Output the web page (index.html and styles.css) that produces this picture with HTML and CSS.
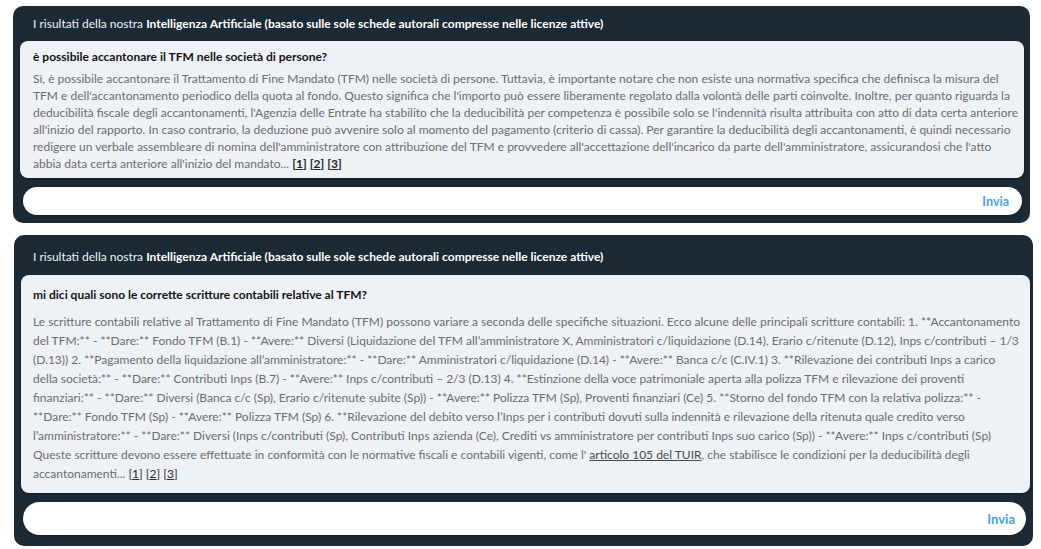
FILE: index.html
```html
<!DOCTYPE html>
<html lang="it">
<head>
  <meta charset="UTF-8" />
  <meta name="viewport" content="width=device-width, initial-scale=1.0" />
  <title>Risposte IA</title>
  <link rel="stylesheet" href="styles.css">
</head>
<body>
  <div class="chat">

    <section class="card card-first">
      <div class="card-head">I risultati della nostra <strong>Intelligenza Artificiale (basato sulle sole schede autorali compresse nelle licenze attive)</strong></div>
      <div class="answer">
        <h2 class="question">è possibile accantonare il TFM nelle società di persone?</h2>
        <p class="reply">Sì, è possibile accantonare il Trattamento di Fine Mandato (TFM) nelle società di persone. Tuttavia, è importante notare che non esiste una normativa specifica che definisca la misura del TFM e dell'accantonamento periodico della quota al fondo. Questo significa che l'importo può essere liberamente regolato dalla volontà delle parti coinvolte. Inoltre, per quanto riguarda la deducibilità fiscale degli accantonamenti, l'Agenzia delle Entrate ha stabilito che la deducibilità per competenza è possibile solo se l'indennità risulta attribuita con atto di data certa anteriore all'inizio del rapporto. In caso contrario, la deduzione può avvenire solo al momento del pagamento (criterio di cassa). Per garantire la deducibilità degli accantonamenti, è quindi necessario redigere un verbale assembleare di nomina dell'amministratore con attribuzione del TFM e provvedere all'accettazione dell'incarico da parte dell'amministratore, assicurandosi che l'atto abbia data certa anteriore all'inizio del mandato... <a class="src src-bold" href="#">1</a> <a class="src src-bold" href="#">2</a> <a class="src src-bold" href="#">3</a></p>
      </div>
      <form class="ask" onsubmit="return false">
        <input type="text" />
        <button type="submit">Invia</button>
      </form>
    </section>

    <section class="card card-second">
      <div class="card-head">I risultati della nostra <strong>Intelligenza Artificiale (basato sulle sole schede autorali compresse nelle licenze attive)</strong></div>
      <div class="answer">
        <h2 class="question">mi dici quali sono le corrette scritture contabili relative al TFM?</h2>
        <p class="reply">Le scritture contabili relative al Trattamento di Fine Mandato (TFM) possono variare a seconda delle specifiche situazioni. Ecco alcune delle principali scritture contabili: 1. **Accantonamento del TFM:** - **Dare:** Fondo TFM (B.1) - **Avere:** Diversi (Liquidazione del TFM all’amministratore X, Amministratori c/liquidazione (D.14), Erario c/ritenute (D.12), Inps c/contributi – 1/3 (D.13)) 2. **Pagamento della liquidazione all’amministratore:** - **Dare:** Amministratori c/liquidazione (D.14) - **Avere:** Banca c/c (C.IV.1) 3. **Rilevazione dei contributi Inps a carico della società:** - **Dare:** Contributi Inps (B.7) - **Avere:** Inps c/contributi – 2/3 (D.13) 4. **Estinzione della voce patrimoniale aperta alla polizza TFM e rilevazione dei proventi finanziari:** - **Dare:** Diversi (Banca c/c (Sp), Erario c/ritenute subite (Sp)) - **Avere:** Polizza TFM (Sp), Proventi finanziari (Ce) 5. **Storno del fondo TFM con la relativa polizza:** - **Dare:** Fondo TFM (Sp) - **Avere:** Polizza TFM (Sp) 6. **Rilevazione del debito verso l’Inps per i contributi dovuti sulla indennità e rilevazione della ritenuta quale credito verso l’amministratore:** - **Dare:** Diversi (Inps c/contributi (Sp), Contributi Inps azienda (Ce), Crediti vs amministratore per contributi Inps suo carico (Sp)) - **Avere:** Inps c/contributi (Sp) Queste scritture devono essere effettuate in conformità con le normative fiscali e contabili vigenti, come l' <a class="law" href="#">articolo 105 del TUIR</a>, che stabilisce le condizioni per la deducibilità degli accantonamenti... <a class="src" href="#">1</a> <a class="src" href="#">2</a> <a class="src" href="#">3</a></p>
      </div>
      <form class="ask" onsubmit="return false">
        <input type="text" />
        <button type="submit">Invia</button>
      </form>
    </section>

  </div>
</body>
</html>
```
FILE: styles.css
```css
body {
  margin: 0;
  background-color: #ffffff;
  font-family: 'Lato', 'Liberation Sans', sans-serif;
  font-size: 12px;
}
.chat {
  padding: 6px 0 0 13px;
}
.card {
  background-color: #1b2a35;
  border-radius: 10px;
  padding: 0 6px 8px 7px;
}
.card-first {
  width: 1004px;
}
.card-second {
  width: 1009px;
  margin: 12px 0 0 1px;
  padding: 0 3px 11px 7px;
}
.card-head {
  color: #eef0f2;
  line-height: 17px;
  padding: 9px 13px;
}
.card-second .card-head {
  padding: 13px 12px 10px;
}
.card-head strong {
  color: #ffffff;
}
.answer {
  background-color: #eef1f6;
  border-radius: 8px;
  padding: 7px 3px 6px 13px;
  box-shadow: 0 1px 2px rgba(0,0,0,0.35);
}
.card-second .answer {
  padding: 10px 7px 10px 12px;
}
.question {
  margin: 0 0 5px;
  font-size: 12px;
  line-height: 17px;
  color: #141414;
}
.card-second .question {
  line-height: 19px;
  margin-bottom: 8px;
}
.reply {
  margin: 0;
  line-height: 17px;
  color: #6d6d6d;
}
.card-second .reply {
  line-height: 19px;
}
/* fonti: la cifra sottolineata, le parentesi no */
.src {
  color: #2a2a2a;
  text-decoration: underline;
}
.src::before,
.src::after {
  display: inline-block;
}
.src::before {
  content: "[";
}
.src::after {
  content: "]";
}
.src-bold {
  font-weight: bold;
}
.law {
  color: #4a4a4a;
}
.ask {
  display: flex;
  align-items: center;
  height: 28px;
  margin: 9px 2px 0 3px;
  background-color: #ffffff;
  border-radius: 14px;
  box-shadow: 0 1px 2px rgba(0,0,0,0.35);
}
.card-second .ask {
  height: 33px;
  border-radius: 17px;
  margin: 9px 4px 0 2px;
}
.ask input {
  flex: 1;
  border: none;
  outline: none;
  background: transparent;
  padding: 0 14px;
  font-family: inherit;
  font-size: 12px;
}
.ask button {
  border: none;
  background: transparent;
  color: #45a4dd;
  font-family: inherit;
  font-size: 12.5px;
  font-weight: bold;
  padding: 0 13px 0 8px;
  cursor: pointer;
}
.card-second .ask button {
  font-size: 13px;
  padding-right: 11px;
}
```
